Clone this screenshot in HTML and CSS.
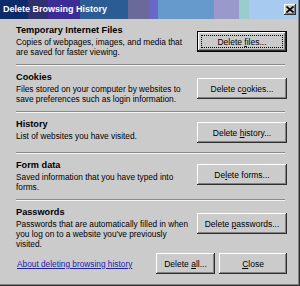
FILE: index.html
```html
<!DOCTYPE html>
<html>
<head>
<meta charset="utf-8">
<link rel="stylesheet" href="styles.css">
</head>
<body>
<div class="window">
  <div class="titlebar">
    <span class="title">Delete Browsing History</span>
    <span class="close-x">
      <svg width="8" height="7" viewBox="0 0 8 7"><path d="M0.5 0.5 L7.5 6.5 M7.5 0.5 L0.5 6.5" stroke="#000" stroke-width="1.6" fill="none"/></svg>
    </span>
  </div>
  <div class="body">
    <div class="group">
      <div class="text">
        <div class="head">Temporary Internet Files</div>
        <div class="desc">Copies of webpages, images, and media that are saved for faster viewing.</div>
      </div>
      <button class="btn default">Delete <u>f</u>iles...</button>
    </div>
    <div class="sep"></div>
    <div class="group">
      <div class="text">
        <div class="head">Cookies</div>
        <div class="desc">Files stored on your computer by websites to save preferences such as login information.</div>
      </div>
      <button class="btn">Delete c<u>o</u>okies...</button>
    </div>
    <div class="sep"></div>
    <div class="group short">
      <div class="text">
        <div class="head">History</div>
        <div class="desc">List of websites you have visited.</div>
      </div>
      <button class="btn">Delete <u>h</u>istory...</button>
    </div>
    <div class="sep"></div>
    <div class="group forms">
      <div class="text">
        <div class="head">Form data</div>
        <div class="desc">Saved information that you have typed into forms.</div>
      </div>
      <button class="btn">De<u>l</u>ete forms...</button>
    </div>
    <div class="sep"></div>
    <div class="group last">
      <div class="text">
        <div class="head">Passwords</div>
        <div class="desc">Passwords that are automatically filled in when you log on to a website you've previously visited.</div>
      </div>
      <button class="btn">Delete <u>p</u>asswords...</button>
    </div>
    <div class="footer">
      <a class="link" href="#">About deleting browsing history</a>
      <div class="actions">
        <button class="btn all">Delete <u>a</u>ll...</button>
        <button class="btn closebtn"><u>C</u>lose</button>
      </div>
    </div>
  </div>
</div>
</body>
</html>
```
FILE: styles.css
```css
html, body {
  margin: 0;
  padding: 0;
  background: #cbcbcb;
}
.window {
  width: 300px;
  height: 286px;
  box-sizing: border-box;
  background: #cbcbcb;
  border-right: 1px solid #303030;
  border-bottom: 1px solid #303030;
  padding-right: 2px;
  padding-bottom: 2px;
  box-shadow: inset -1px -1px 0 #808080;
  font-family: "Liberation Sans", Arial, sans-serif;
  color: #000;
  display: flex;
  flex-direction: column;
}
.titlebar {
  height: 19px;
  display: flex;
  align-items: center;
  justify-content: space-between;
  background: linear-gradient(to right,
    #0d2b6b 0 28px,
    #30306f 28px 48px,
    #3b2c98 48px 80px,
    #2c5c94 80px 128px,
    #6a6a9a 128px 149px,
    #6a66cc 149px 158px,
    #6699cc 158px 214px,
    #9999cc 214px 239px,
    #99cccc 239px 249px,
    #a6caf0 249px);
}
.title {
  color: #fff;
  font-weight: bold;
  font-size: 9px;
  padding-left: 3px;
  line-height: 19px;
}
.close-x {
  width: 12px;
  height: 11px;
  box-sizing: border-box;
  margin-right: 1px;
  background: #cbcbcb;
  box-shadow: inset -1px -1px #303030, inset 1px 1px #fff, inset -2px -2px #808080;
  display: flex;
  align-items: center;
  justify-content: center;
}
.close-x svg { display: block; margin-top: -1px; margin-left: -1px; }
.body {
  flex: 1;
  padding: 0 10px 0 16px;
  display: flex;
  flex-direction: column;
}
.group {
  display: flex;
  align-items: center;
  justify-content: space-between;
}
.group.short { min-height: 39px; }
.group.forms { align-items: flex-start; }
.group.forms .btn { margin-top: 10px; }
.group.last { align-items: flex-start; }
.group.last .btn { margin-top: 12px; }
.text {
  align-self: flex-start;
  width: 176px;
  padding: 5px 0 7px;
}
.group.last .text { padding-bottom: 4px; }
.head {
  font-weight: bold;
  font-size: 9.2px;
  line-height: 13px;
  white-space: nowrap;
}
.desc {
  font-size: 8.3px;
  line-height: 10px;
}
.sep {
  height: 0;
  border-top: 1px solid #8a8a8a;
  border-bottom: 1px solid #f4f4f4;
  margin-right: 2px;
}
.btn {
  width: 90px;
  height: 21px;
  box-sizing: border-box;
  border: 0;
  padding: 0;
  margin: 0;
  background: #cbcbcb;
  font-family: "Liberation Sans", Arial, sans-serif;
  font-size: 8.5px;
  color: #000;
  box-shadow: inset -1px -1px #303030, inset 1px 1px #fff, inset -2px -2px #808080;
  position: relative;
  flex: none;
}
.btn u { text-underline-offset: 1px; }
.btn.default {
  box-shadow: inset 0 0 0 1px #000, inset -2px -2px #303030, inset 2px 2px #fff, inset -3px -3px #808080;
}
.btn.default::after {
  content: "";
  position: absolute;
  inset: 4px;
  border: 1px dotted #000;
}
.footer {
  display: flex;
  align-items: center;
  justify-content: space-between;
  padding-top: 0;
}
.link {
  font-size: 8.3px;
  color: #2222aa;
  text-decoration: underline;
  padding-left: 1px;
}
.actions {
  display: flex;
  gap: 4px;
}
.btn.all { width: 59px; }
.btn.closebtn { width: 68px; }
```
